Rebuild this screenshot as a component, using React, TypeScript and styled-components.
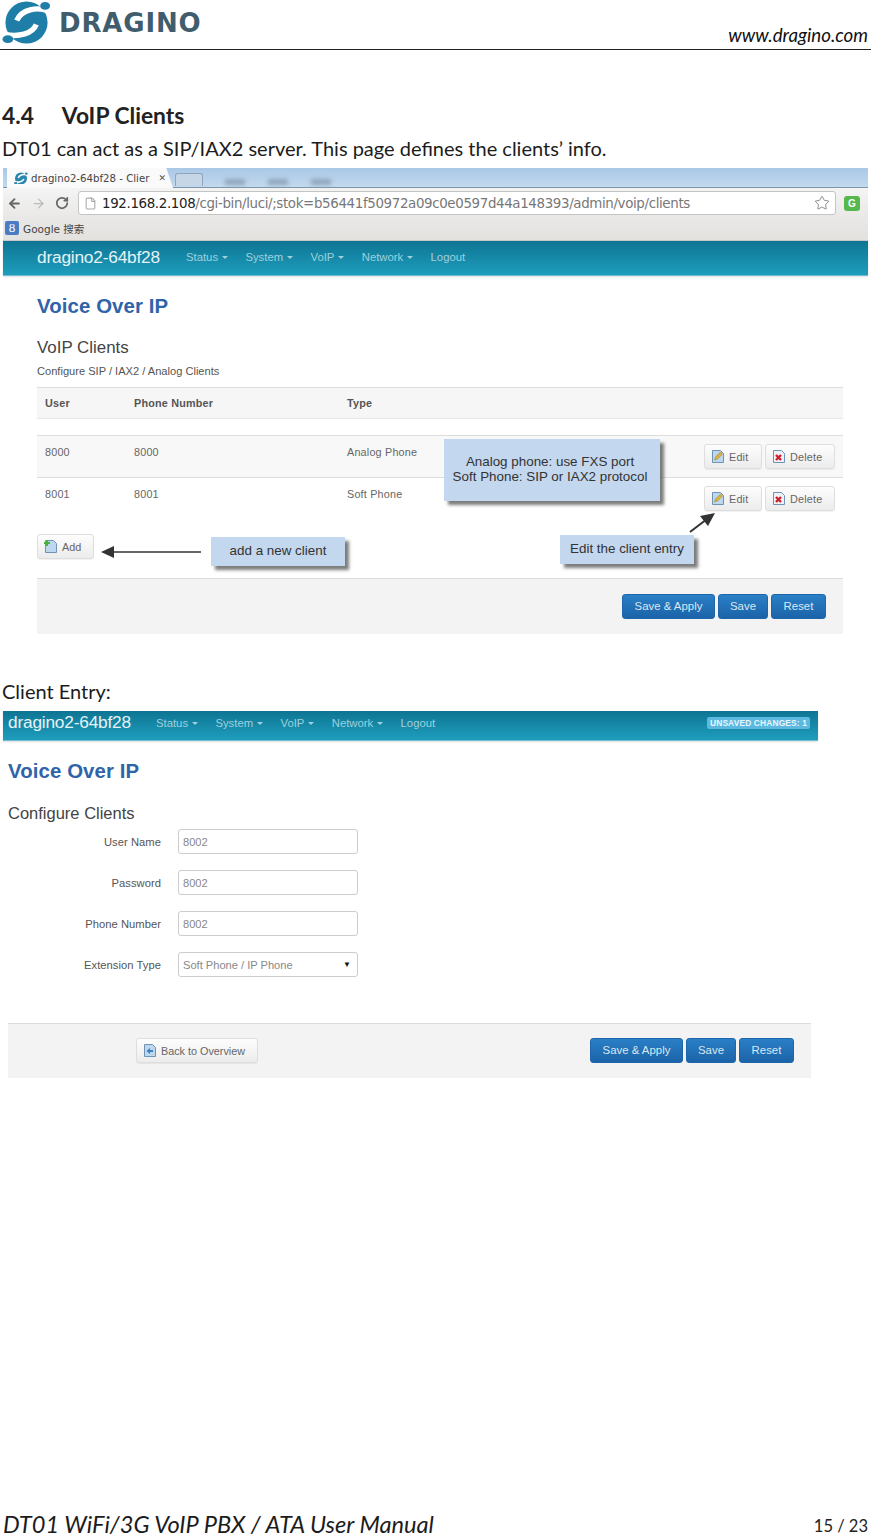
import React from 'react';
import styled, { createGlobalStyle } from 'styled-components';
import { ArrowLeft, ArrowRight, RotateCw, File, Star } from 'lucide-react';

const GlobalStyle = createGlobalStyle`
  html, body { margin: 0; padding: 0; background: #fff; }
  * { box-sizing: border-box; }
`;

const Page = styled.div`
  width: 871px;
  height: 1536px;
  display: flex;
  flex-direction: column;
  overflow: hidden;
  font-family: 'Lato', sans-serif;
  color: #1c1c1c;
`;

const Header = styled.header`
  height: 50px;
  flex: none;
  display: flex;
  align-items: flex-start;
  justify-content: space-between;
  border-bottom: 1px solid #222;
  padding: 0 3px 0 2px;
`;

const Brand = styled.div`
  display: flex;
  align-items: flex-start;
  gap: 8px;
`;

const Wordmark = styled.span`
  font-family: 'DejaVu Sans', sans-serif;
  font-weight: 700;
  font-size: 26px;
  line-height: 24px;
  margin-top: 11px;
  letter-spacing: 0.85px;
  color: #3f5d6c;
`;

const Site = styled.span`
  font-style: italic;
  font-size: 18.7px;
  line-height: 20px;
  margin-top: 25px;
  color: #111;
`;

const Heading = styled.h2`
  margin: 51px 0 0;
  padding-left: 2px;
  font-size: 22.8px;
  line-height: 28px;
  font-weight: 700;
  display: flex;
  gap: 28px;
  color: #222;
`;

const Para = styled.p<{ $top: number }>`
  margin: ${p => p.$top}px 0 0;
  padding-left: 2px;
  font-size: 20px;
  line-height: 24px;
  color: #1c1c1c;
`;

const Shot = styled.section<{ $top: number; $left: number; $width: number }>`
  position: relative;
  flex: none;
  margin: ${p => p.$top}px 0 0 ${p => p.$left}px;
  width: ${p => p.$width}px;
  font-family: 'Liberation Sans', sans-serif;
  color: #555;
`;

const TabBar = styled.div`
  height: 20px;
  display: flex;
  background: linear-gradient(#a9c8e6, #c3d9ee);
  border-bottom: 1px solid #7d94ab;
`;

const Tab = styled.div`
  width: 166px;
  margin-left: 4px;
  height: 20px;
  background: #fafafa;
  clip-path: polygon(0 0, 96% 0, 100% 100%, 0 100%);
  display: flex;
  align-items: center;
  gap: 3px;
  padding-left: 7px;
  font-size: 10.2px;
  color: #444;
  font-family: 'DejaVu Sans', sans-serif;
  white-space: nowrap;
`;

const TabClose = styled.span`
  margin-left: 6px;
  font-size: 9px;
  color: #555;
`;

const NewTab = styled.div`
  width: 28px;
  height: 13px;
  margin: 5px 0 0 2px;
  background: #c6d6e6;
  border: 1px solid #8ea5bb;
  border-bottom: none;
  border-radius: 3px 3px 0 0;
`;

const Smudges = styled.div`
  display: flex;
  gap: 23px;
  margin: 11px 0 0 22px;
`;

const Smudge = styled.span`
  width: 20px;
  height: 6px;
  background: #8fa5bc;
  filter: blur(2px);
`;

const Toolbar = styled.div`
  height: 30px;
  display: flex;
  align-items: center;
  padding: 0 8px 0 4px;
  background: linear-gradient(#f4f4f4, #e9e8e6);
  color: #666;
`;

const NavIcons = styled.div`
  display: flex;
  align-items: center;
  gap: 9px;
  margin-right: 9px;
`;

const Address = styled.div`
  flex: 1;
  height: 24px;
  background: #fff;
  border: 1px solid #c4c4c4;
  border-radius: 3px;
  display: flex;
  align-items: center;
  padding: 0 5px;
  gap: 5px;
  font-family: 'DejaVu Sans', sans-serif;
  font-size: 13.4px;
  letter-spacing: -0.36px;
  white-space: nowrap;
  color: #777;
  b { font-weight: 400; color: #222; }
`;

const AddressText = styled.span`
  flex: 1;
`;

const GBadge = styled.span`
  width: 16px;
  height: 15px;
  margin-left: 8px;
  border-radius: 3px;
  background: #55b84f;
  color: #fff;
  font-size: 10px;
  font-weight: 700;
  text-align: center;
  line-height: 15px;
`;

const Bookmarks = styled.div`
  height: 23px;
  display: flex;
  align-items: center;
  gap: 4px;
  padding: 0 0 2px 2px;
  background: linear-gradient(#e9e8e6, #e3e2df);
  border-bottom: 1px solid #c9c9c9;
  font-family: 'DejaVu Sans', 'Noto Sans CJK SC', sans-serif;
  font-size: 10.5px;
  color: #444;
`;

const GMark = styled.span`
  width: 14px;
  height: 14px;
  background: #4a7cc4;
  border-radius: 2px;
  color: #fff;
  font-family: 'Liberation Serif', serif;
  font-size: 13px;
  line-height: 14px;
  text-align: center;
`;

const NavBar = styled.nav<{ $height: number; $pad: number; $lift: number }>`
  height: ${p => p.$height}px;
  display: flex;
  align-items: center;
  padding: 0 8px ${p => p.$lift}px ${p => p.$pad}px;
  background: linear-gradient(#0e7593, #1f9dbd);
  border-bottom: 1px solid #6dbcd2;
  box-shadow: 0 1px 2px rgba(0, 0, 0, 0.12);
  font-size: 11.3px;
  color: #9fd0de;
`;

const NavBrand = styled.span<{ $width: number }>`
  width: ${p => p.$width}px;
  flex: none;
  font-size: 17.3px;
  letter-spacing: -0.2px;
  color: #e4f3f7;
`;

const NavItem = styled.span<{ $caret?: boolean }>`
  margin-right: 17.4px;
  white-space: nowrap;
  &::after {
    content: '';
    display: ${p => (p.$caret ? 'inline-block' : 'none')};
    margin-left: 4px;
    vertical-align: 2px;
    border: 3px solid transparent;
    border-top-color: #9fd0de;
    border-bottom: none;
  }
`;

const Changes = styled.span`
  margin-left: auto;
  background: #5db8e0;
  color: #e8f6fb;
  border-radius: 2px;
  padding: 1px 3px;
  font-size: 8.4px;
  line-height: 10px;
  font-weight: 700;
  letter-spacing: 0.15px;
`;

const Body = styled.div<{ $pad: number }>`
  padding: 18px 25px 0 ${p => p.$pad}px;
`;

const Title = styled.h1`
  margin: 0;
  font-size: 20.4px;
  line-height: 24px;
  font-weight: 700;
  letter-spacing: 0.1px;
  color: #2f64a9;
`;

const SubTitle = styled.h3<{ $top: number; $size: number }>`
  margin: ${p => p.$top}px 0 0;
  font-size: ${p => p.$size}px;
  line-height: 20px;
  font-weight: 400;
  color: #444;
`;

const Note = styled.p`
  margin: 6px 0 0;
  font-size: 11.1px;
  line-height: 14px;
  color: #555;
`;

const Grid = styled.div<{ $bg?: string; $height: number; $top?: number; $line?: boolean }>`
  display: grid;
  grid-template-columns: 89px 213px 1fr auto;
  align-items: start;
  height: ${p => p.$height}px;
  margin-top: ${p => p.$top ?? 0}px;
  padding: 9px 8px 0;
  background: ${p => p.$bg ?? '#fff'};
  border-top: ${p => (p.$line ? '1px solid #ddd' : 'none')};
  font-size: 10.8px;
  line-height: 14px;
  letter-spacing: 0.2px;
  color: #666;
`;

const HeadGrid = styled(Grid)`
  font-weight: 700;
  color: #555;
  padding-top: 8px;
  border-bottom: 1px solid #e6e6e6;
`;

const RowActions = styled.div`
  display: flex;
  gap: 3px;
  margin-top: -1px;
`;

const LightButton = styled.div<{ $width: number }>`
  width: ${p => p.$width}px;
  height: 25px;
  display: flex;
  align-items: center;
  gap: 4px;
  padding-left: 6px;
  border: 1px solid #dedede;
  border-radius: 3px;
  background: linear-gradient(#fdfdfd, #ececec);
  box-shadow: 0 1px 1px rgba(0, 0, 0, 0.06);
  font-size: 10.8px;
  color: #666;
  white-space: nowrap;
`;

const AddRow = styled.div`
  margin-top: 15px;
  height: 45px;
  border-bottom: 1px solid #dcdcdc;
`;

const ActionBar = styled.div<{ $pad: number; $height: number }>`
  height: ${p => p.$height}px;
  display: flex;
  align-items: flex-start;
  justify-content: flex-end;
  gap: 3px;
  padding: 15px ${p => p.$pad}px 0 0;
  background: #f3f3f3;
`;

const EntryBar = styled(ActionBar)`
  margin: 46px 7px 0 5px;
  padding-top: 14px;
  border-top: 1px solid #dcdcdc;
`;

const BackSlot = styled.div`
  margin-right: auto;
  margin-left: 128px;
`;

const BlueButton = styled.div<{ $width: number }>`
  width: ${p => p.$width}px;
  height: 25px;
  border-radius: 3px;
  background: linear-gradient(#2a7fc6, #1c63a8);
  border: 1px solid #1d66ab;
  color: #dbe8f4;
  font-size: 11.4px;
  line-height: 23px;
  text-align: center;
`;

const Callout = styled.div<{ $x: number; $y: number; $w: number; $h: number; $nudge?: number }>`
  position: absolute;
  left: ${p => p.$x}px;
  top: ${p => p.$y}px;
  width: ${p => p.$w}px;
  height: ${p => p.$h}px;
  display: flex;
  flex-direction: column;
  align-items: center;
  justify-content: center;
  padding: 0 ${p => p.$nudge ?? 0}px 2px 0;
  background: #c3d7ee;
  box-shadow: 4px 4px 3px rgba(70, 70, 70, 0.7);
  font-size: 13.4px;
  line-height: 15px;
  color: #333;
  white-space: nowrap;
`;

const Overlay = styled.svg<{ $x: number; $y: number }>`
  position: absolute;
  left: ${p => p.$x}px;
  top: ${p => p.$y}px;
`;

const Form = styled.div`
  margin-top: 6px;
  display: grid;
  grid-template-columns: 153px 180px;
  column-gap: 17px;
  row-gap: 16px;
  align-items: center;
`;

const Label = styled.label`
  text-align: right;
  font-size: 11.2px;
  letter-spacing: 0.05px;
  color: #555;
`;

const Field = styled.div`
  height: 25px;
  display: flex;
  align-items: center;
  justify-content: space-between;
  padding: 0 4px;
  border: 1px solid #ccc;
  border-radius: 3px;
  background: #fff;
  font-size: 11.1px;
  color: #888;
`;

const SelectCaret = styled.span`
  font-size: 8px;
  color: #111;
  margin-right: 2px;
`;

const Footer = styled.footer`
  margin-top: auto;
  height: 36px;
  display: flex;
  align-items: flex-end;
  justify-content: space-between;
  padding: 0 3px 1px;
`;

const FooterTitle = styled.span`
  font-style: italic;
  font-size: 23.6px;
  line-height: 22px;
  color: #1c1c1c;
`;

const PageNum = styled.span`
  font-size: 16.5px;
  line-height: 18px;
  color: #222;
`;

const DocIcon = ({ kind }: { kind: 'add' | 'edit' | 'del' | 'back' }) => (
  <svg width="14" height="15" viewBox="0 0 14 15">
    <path d="M1.5 1.5h8l3 3v9h-11z" fill={kind === 'del' ? '#eef1f5' : '#bcd7ee'} stroke="#6f93b5" />
    {kind === 'add' && <path d="M0 3h2V1h2v2h2v2H4v2H2V5H0z" fill="#4caf3f" />}
    {kind === 'edit' && <path d="M3.5 11l1-3 5-5 2 2-5 5z" fill="#e0b33c" stroke="#8d7a35" strokeWidth=".5" />}
    {kind === 'del' && <path d="M4 6l5 5M9 6l-5 5" stroke="#d0202a" strokeWidth="2.4" />}
    {kind === 'back' && <path d="M3.5 8l3.5-3v2h3v2H7v2z" fill="#3f7fbb" />}
  </svg>
);

const Logo = ({ size, color }: { size: number; color: string }) => (
  <svg width={size} height={size * 0.92} viewBox="0 0 50 46">
    <circle cx="25" cy="23" r="21.5" fill={color} />
    <path d="M47 11C36 7 20 9 15 21" fill="none" stroke="#fff" strokeWidth="5.5" />
    <path d="M35 25C31 35 16 38 3 35" fill="none" stroke="#fff" strokeWidth="5.5" />
    <ellipse cx="44" cy="6" rx="5" ry="4" fill={color} />
    <ellipse cx="6" cy="40" rx="5.5" ry="4" fill={color} />
  </svg>
);

const ClientRow = ({ id, type, bg }: { id: string; type: string; bg?: string }) => (
  <Grid $height={42} $bg={bg} $line>
    <span>{id}</span>
    <span>{id}</span>
    <span>{type}</span>
    <RowActions>
      <LightButton $width={58}><DocIcon kind="edit" />Edit</LightButton>
      <LightButton $width={70}><DocIcon kind="del" />Delete</LightButton>
    </RowActions>
  </Grid>
);

const SaveButtons = () => (
  <>
    <BlueButton $width={93}>Save &amp; Apply</BlueButton>
    <BlueButton $width={50}>Save</BlueButton>
    <BlueButton $width={55}>Reset</BlueButton>
  </>
);

const MainNav = ({ height, pad, brand, lift, changes }: { height: number; pad: number; brand: number; lift: number; changes?: boolean }) => (
  <NavBar $height={height} $pad={pad} $lift={lift}>
    <NavBrand $width={brand}>dragino2-64bf28</NavBrand>
    <NavItem $caret>Status</NavItem>
    <NavItem $caret>System</NavItem>
    <NavItem $caret>VoIP</NavItem>
    <NavItem $caret>Network</NavItem>
    <NavItem>Logout</NavItem>
    {changes && <Changes>UNSAVED CHANGES: 1</Changes>}
  </NavBar>
);

export default function App() {
  return (
    <Page>
      <GlobalStyle />
      <Header>
        <Brand>
          <Logo size={49} color="#1f7ea8" />
          <Wordmark>DRAGINO</Wordmark>
        </Brand>
        <Site>www.dragino.com</Site>
      </Header>

      <Heading><span>4.4</span><span>VoIP Clients</span></Heading>
      <Para $top={7}>DT01 can act as a SIP/IAX2 server. This page defines the clients’ info.</Para>

      <Shot $top={8} $left={3} $width={865}>
        <TabBar>
          <Tab>
            <Logo size={14} color="#2a86ad" />
            dragino2-64bf28 - Clier
            <TabClose>✕</TabClose>
          </Tab>
          <NewTab />
          <Smudges><Smudge /><Smudge /><Smudge /></Smudges>
        </TabBar>
        <Toolbar>
          <NavIcons>
            <ArrowLeft size={15} strokeWidth={3} />
            <ArrowRight size={15} strokeWidth={2} color="#bbb" />
            <RotateCw size={14} strokeWidth={3} />
          </NavIcons>
          <Address>
            <File size={13} color="#aaa" />
            <AddressText><b>192.168.2.108</b>/cgi-bin/luci/;stok=b56441f50972a09c0e0597d44a148393/admin/voip/clients</AddressText>
            <Star size={16} strokeWidth={1} color="#555" />
          </Address>
          <GBadge>G</GBadge>
        </Toolbar>
        <Bookmarks><GMark>8</GMark>Google 搜索</Bookmarks>
        <MainNav height={35} pad={34} brand={149} lift={2} />

        <Body $pad={34}>
          <Title>Voice Over IP</Title>
          <SubTitle $top={20} $size={16.9}>VoIP Clients</SubTitle>
          <Note>Configure SIP / IAX2 / Analog Clients</Note>
          <HeadGrid $height={32} $top={9} $bg="#f6f6f6" $line>
            <span>User</span><span>Phone Number</span><span>Type</span>
          </HeadGrid>
          <Grid $height={16} />
          <ClientRow id="8000" type="Analog Phone" bg="#f8f8f8" />
          <ClientRow id="8001" type="Soft Phone" />
          <AddRow>
            <LightButton $width={57}><DocIcon kind="add" />Add</LightButton>
          </AddRow>
          <ActionBar $pad={17} $height={55}><SaveButtons /></ActionBar>
        </Body>

        <Callout $x={441} $y={271} $w={216} $h={62} $nudge={4}>
          <span>Analog phone: use FXS port</span>
          <span>Soft Phone: SIP or IAX2 protocol</span>
        </Callout>
        <Callout $x={208} $y={369} $w={134} $h={29}>add a new client</Callout>
        <Callout $x={557} $y={367} $w={134} $h={29}>Edit the client entry</Callout>

        <Overlay $x={98} $y={376} width="102" height="16" viewBox="0 0 102 16">
          <path d="M12 8h88" stroke="#333" strokeWidth="1.6" />
          <path d="M0 8l13-6v12z" fill="#333" />
        </Overlay>
        <Overlay $x={684} $y={342} width="30" height="24" viewBox="0 0 30 24">
          <path d="M3 22l17-13" stroke="#333" strokeWidth="2" />
          <path d="M28 3l-15 3 8 10z" fill="#333" />
        </Overlay>
      </Shot>

      <Para $top={45}>Client Entry:</Para>

      <Shot $top={8} $left={3} $width={815}>
        <MainNav height={30} pad={5} brand={148} lift={6} changes />
        <Body $pad={5}>
          <Title>Voice Over IP</Title>
          <SubTitle $top={20} $size={16.5}>Configure Clients</SubTitle>
          <Form>
            <Label>User Name</Label><Field>8002</Field>
            <Label>Password</Label><Field>8002</Field>
            <Label>Phone Number</Label><Field>8002</Field>
            <Label>Extension Type</Label><Field>Soft Phone / IP Phone<SelectCaret>▼</SelectCaret></Field>
          </Form>
        </Body>
        <EntryBar $pad={17} $height={55}>
          <BackSlot><LightButton $width={122}><DocIcon kind="back" />Back to Overview</LightButton></BackSlot>
          <SaveButtons />
        </EntryBar>
      </Shot>

      <Footer>
        <FooterTitle>DT01 WiFi/3G VoIP PBX / ATA User Manual</FooterTitle>
        <PageNum>15 / 23</PageNum>
      </Footer>
    </Page>
  );
}
